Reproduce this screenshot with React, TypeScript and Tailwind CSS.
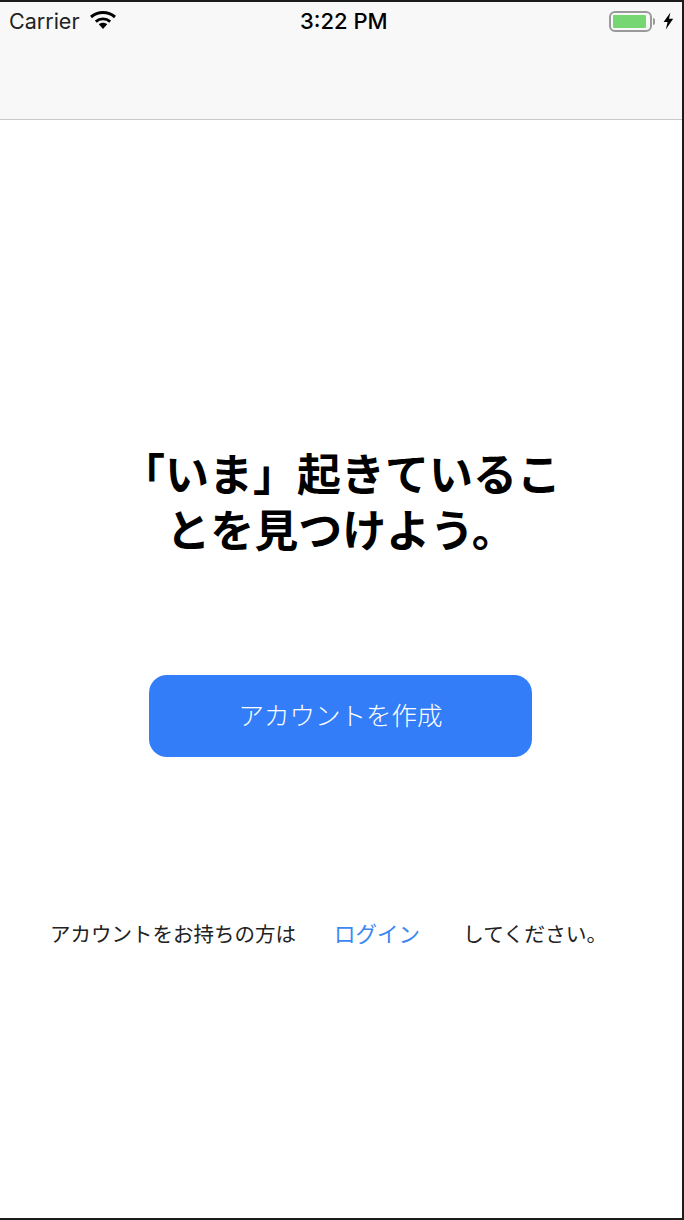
import React from 'react';

const jp = 'font-["Noto_Sans_CJK_JP","Liberation_Sans",sans-serif]';

const WifiIcon = () => (
  <svg width="28" height="20" viewBox="0 0 28 20" className="text-black">
    <path d="M14 18 L9.8 13.2 C12.2 11.2 15.8 11.2 18.2 13.2 Z" fill="currentColor" />
    <path d="M6.8 10.6 C11 6.9 17 6.9 21.2 10.6" fill="none" stroke="currentColor" strokeWidth="2.8" />
    <path d="M2 6 C9 0 19 0 26 6" fill="none" stroke="currentColor" strokeWidth="3" />
  </svg>
);

const BoltIcon = () => (
  <svg width="11" height="18" viewBox="0 0 11 18">
    <path d="M7.4 0.5 L0.6 10 L4.6 10 L2.8 17.5 L10.2 6.8 L6 6.8 Z" fill="#000" />
  </svg>
);

const StatusBar = () => (
  <div className="h-[38px] flex items-center justify-between pl-[9px] pr-[8px] relative">
    <div className="flex items-center gap-[10px]">
      <span className='font-["Inter","Liberation_Sans",sans-serif] text-[21.5px] text-[#222]'>Carrier</span>
      <WifiIcon />
    </div>
    <span className='absolute left-[300px] top-[4px] font-["Inter","Liberation_Sans",sans-serif] text-[22px] font-medium text-black leading-[30px]'>
      3:22 PM
    </span>
    <div className="flex items-center">
      <div className="w-[43px] h-[21px] rounded-[6px] border-2 border-[#9a9a9a] p-[2px] flex">
        <div className="w-[33px] h-full bg-[#76d672] rounded-[1px]" />
      </div>
      <div className="w-[2px] h-[7px] bg-[#9a9a9a] rounded-r-full ml-[1px] mr-[8px]" />
      <BoltIcon />
    </div>
  </div>
);

export default function App() {
  return (
    <div className="w-[684px] h-[1220px] bg-white border-t-2 border-r-2 border-b-2 border-[#1c1c1c] flex flex-col overflow-hidden">
      <div className="h-[118px] shrink-0 bg-[#f8f8f8] border-b border-[#c8c8c8]">
        <StatusBar />
      </div>

      <div className={`flex-1 flex flex-col items-center ${jp}`}>
        <h1 className="mt-[324px] w-[460px] text-center text-[44px] leading-[56px] font-bold text-black">
          「いま」起きているこ
          <br />
          とを見つけよう。
        </h1>

        <button className="mt-[119px] ml-[-1px] w-[383px] h-[82px] pb-[3px] rounded-[18px] bg-[#337ef8] text-white text-[25.5px] font-light flex items-center justify-center">
          アカウントを作成
        </button>

        <div className="mt-[160px] w-full pl-[50px] flex items-center text-[20.5px] leading-[32px] text-[#222]">
          <span>アカウントをお持ちの方は</span>
          <a className="ml-[38px] text-[#3b88f5] text-[21.5px]">ログイン</a>
          <span className="ml-[43px] text-[20.8px]">してください。</span>
        </div>
      </div>
    </div>
  );
}
